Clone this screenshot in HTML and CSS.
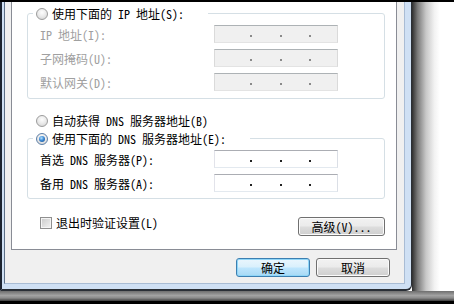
FILE: index.html
```html
<!DOCTYPE html>
<html lang="zh-CN">
<head>
    <meta charset="UTF-8">
    <meta name="viewport" content="width=device-width, initial-scale=1.0">
    <title>Internet 协议版本 4 (TCP/IPv4) 属性</title>
    <link rel="stylesheet" href="styles.css">
</head>
<body>
    <div class="screen">
        <div class="top-edge"></div>
        <div class="stage">
            <div class="dialog">
                <div class="client">
                    <div class="tab-page">
                        <fieldset class="group">
                            <legend><span class="legend-inner"><span class="radio"></span>使用下面的 IP 地址(S):</span></legend>
                            <div class="field-row first is-disabled">
                                <span class="field-label">IP 地址(I):</span>
                                <div class="ip-field is-disabled"><span class="dot"></span><span class="dot"></span><span class="dot"></span></div>
                            </div>
                            <div class="field-row is-disabled">
                                <span class="field-label">子网掩码(U):</span>
                                <div class="ip-field is-disabled"><span class="dot"></span><span class="dot"></span><span class="dot"></span></div>
                            </div>
                            <div class="field-row is-disabled">
                                <span class="field-label">默认网关(D):</span>
                                <div class="ip-field is-disabled"><span class="dot"></span><span class="dot"></span><span class="dot"></span></div>
                            </div>
                        </fieldset>

                        <div class="option"><span class="radio"></span>自动获得 DNS 服务器地址(B)</div>

                        <fieldset class="group group-dns">
                            <legend><span class="legend-inner"><span class="radio on"></span>使用下面的 DNS 服务器地址(E):</span></legend>
                            <div class="field-row first">
                                <span class="field-label">首选 DNS 服务器(P):</span>
                                <div class="ip-field"><span class="dot"></span><span class="dot"></span><span class="dot"></span></div>
                            </div>
                            <div class="field-row">
                                <span class="field-label">备用 DNS 服务器(A):</span>
                                <div class="ip-field"><span class="dot"></span><span class="dot"></span><span class="dot"></span></div>
                            </div>
                        </fieldset>

                        <div class="footer-row">
                            <div class="check"><span class="checkbox"></span>退出时验证设置(L)</div>
                            <button class="btn btn-wide">高级(V)...</button>
                        </div>
                    </div>
                    <div class="actions">
                        <button class="btn btn-default">确定</button>
                        <button class="btn">取消</button>
                    </div>
                </div>
            </div>
            <div class="side-shadow"></div>
            <div class="desk"></div>
        </div>
        <div class="bottom-shadow"></div>
        <div class="bottom-edge"></div>
    </div>
</body>
</html>
```

FILE: styles.css
```css
body {
    margin: 0;
    font-family: "Noto Sans Mono CJK SC", "Noto Sans CJK SC", "Noto Sans", sans-serif;
    font-size: 12px;
    color: #000;
}
.screen {
    width: 454px;
    height: 304px;
    display: flex;
    flex-direction: column;
    background: #fff;
    overflow: hidden;
}
.top-edge {
    height: 2px;
    background: #000;
}
.stage {
    display: flex;
    height: 289px;
}
.dialog {
    box-sizing: border-box;
    width: 412px;
    height: 289px;
    padding: 0 6px 5px 2px;
    background: #cfe0f4;
    border-left: 2px solid #1d2430;
    border-right: 1px solid #2a2f36;
    border-bottom: 2px solid #2a2f36;
    border-bottom-right-radius: 6px;
}
.client {
    box-sizing: border-box;
    height: 282px;
    padding: 0 7px 0 6px;
    background: #f0f0f0;
    border-left: 1px solid #5d6f86;
    border-right: 1px solid #a9bcd4;
    border-bottom: 1px solid #a9bcd4;
}
.tab-page {
    box-sizing: border-box;
    height: 248px;
    padding: 3px 11px 0 15px;
    background: #fff;
    border: 1px solid #898c95;
    border-top: none;
}
.side-shadow {
    width: 28px;
    background: linear-gradient(to right, #2e2e2e, #7a7a7a 20%, #c8c8c8 50%, #f2f2f2 80%, #fff);
}
.desk {
    flex: 1;
    background: #fff;
}
.bottom-shadow {
    height: 10px;
    background: linear-gradient(#6e6e6e, #a2a2a2 45%, #8a8a8a 70%, #3c3c3c);
}
.bottom-edge {
    height: 3px;
    background: #000;
}

/* group boxes */
.group {
    margin: 0;
    padding: 0 0 7px 0;
    min-width: 0;
    border: 1px solid #d5dfe5;
    border-radius: 3px;
}
.group-dns {
    padding-bottom: 6px;
}
.group legend {
    margin-left: 5px;
    padding: 0 24px 0 3px;
    line-height: 17px;
}
.legend-inner {
    display: flex;
    align-items: center;
    gap: 4px;
}
.field-row {
    display: flex;
    align-items: center;
    height: 18px;
    margin-top: 6px;
    padding-left: 12px;
}
.field-row.first {
    margin-top: 3px;
}
.field-label {
    width: 174px;
}
.field-row.is-disabled .field-label {
    color: #a0a0a0;
}
.ip-field {
    box-sizing: border-box;
    width: 124px;
    height: 18px;
    display: flex;
    align-items: flex-end;
    justify-content: space-between;
    padding: 0 26px 5px 35px;
    background: #fff;
    border: 1px solid;
    border-color: #abadb3 #dbdfe6 #e3e9ef #e2e3ea;
}
.ip-field.is-disabled {
    background: #f0f0f0;
    border-color: #adb2b5 #dadada #e3e3e3 #dadada;
}
.dot {
    width: 2px;
    height: 2px;
    background: #222;
}
.ip-field.is-disabled .dot {
    background: #8a8a8a;
}

/* radio, checkbox */
.radio {
    box-sizing: border-box;
    width: 12px;
    height: 12px;
    flex: none;
    display: flex;
    align-items: center;
    justify-content: center;
    border-radius: 50%;
    border: 1px solid #9c9c9c;
    background: radial-gradient(circle at 50% 35%, #fdfdfd 0, #ececec 45%, #cfcfcf 100%);
}
.radio.on {
    border-color: #5d7fa8;
}
.radio.on::after {
    content: "";
    width: 6px;
    height: 6px;
    border-radius: 50%;
    background: radial-gradient(circle at 40% 35%, #b5e3ff 0, #3d8ad6 45%, #15457f 100%);
}
.option {
    display: flex;
    align-items: center;
    gap: 4px;
    margin: 13px 0 1px;
    padding-left: 9px;
    line-height: 17px;
}
.footer-row {
    display: flex;
    justify-content: space-between;
    align-items: flex-start;
    margin-top: 18px;
    padding-left: 13px;
}
.check {
    display: flex;
    align-items: center;
    gap: 4px;
    height: 12px;
    line-height: 12px;
}
.checkbox {
    box-sizing: border-box;
    width: 12px;
    height: 12px;
    border: 1px solid #8f8f8f;
    box-shadow: inset 0 0 0 1px #f4f4f4;
    background: linear-gradient(135deg, #c9c9c9, #f3f3f3);
}

/* buttons */
.btn {
    box-sizing: border-box;
    width: 74px;
    height: 19px;
    padding: 0;
    font: inherit;
    line-height: 16px;
    color: #000;
    border: 1px solid #707070;
    border-radius: 3px;
    background: linear-gradient(#f2f2f2 0%, #ebebeb 48%, #dddddd 52%, #cfcfcf 100%);
    box-shadow: inset 0 0 0 1px #fbfbfb;
}
.btn-wide {
    width: 87px;
}
.btn-default {
    border-color: #3c7fb1;
    background: linear-gradient(#eaf6fd 0%, #d9f0fc 48%, #bee6fd 52%, #a7d9f5 100%);
    box-shadow: inset 0 0 0 1px #8fd6f8;
}
.actions {
    display: flex;
    justify-content: flex-end;
    gap: 6px;
    padding: 8px 7px 0 0;
}
```
